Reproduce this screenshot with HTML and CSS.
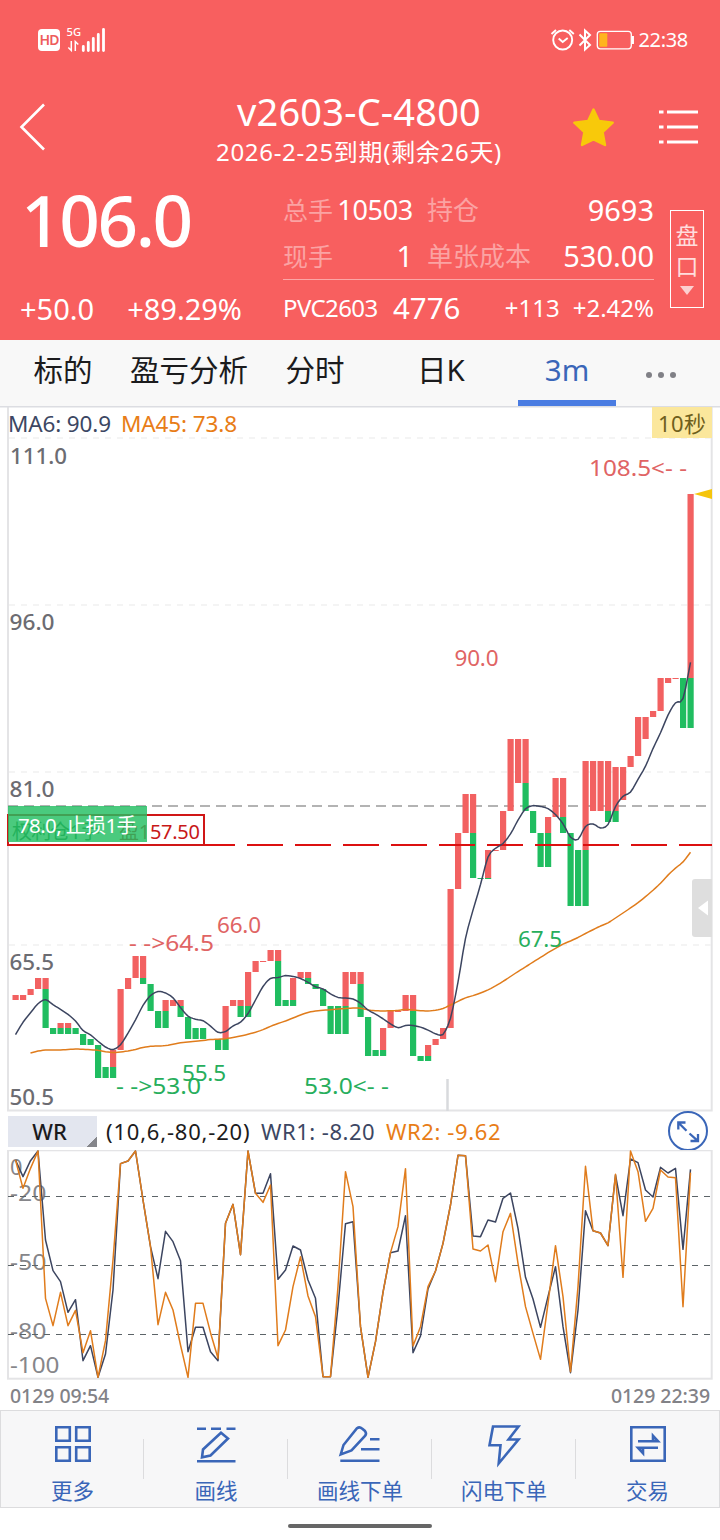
FILE: index.html
```html
<!DOCTYPE html>
<html lang="zh-CN">
<head>
<meta charset="utf-8">
<title>v2603-C-4800</title>
<link rel="stylesheet" href="styles.css">
</head>
<body>
<header class="header">
  <div class="status">
    <div class="status-left">
      <span class="hd">HD</span>
      <svg class="signal" width="40" height="32" viewBox="66 24 40 32">
        <text x="66.5" y="36" class="net" textLength="14.500" lengthAdjust="spacingAndGlyphs">5G</text>
        <path d="M71.3 41v9.5l-3-3M75.3 51v-9.500l3 3" fill="none" stroke="#fff" stroke-width="1.5"/>
        <path d="M83.300 46.500v4M88.300 42.500v8M93.300 38.500v12M98.300 34.500v16M103.500 29.300v21.200" stroke="#fff" stroke-width="2.800" stroke-linecap="round"/>
      </svg>
    </div>
    <div class="status-right">
      <svg width="84" height="26" viewBox="550 27 84 26" fill="none" stroke="#fff">
        <circle cx="562.700" cy="40" r="9.500" stroke-width="1.900"/>
        <path d="M558.700 38.500l4 3.500l5-4M551.500 34l4.500-4M573.800 34l-4.500-4" stroke-width="1.900"/>
        <path d="M579.500 34.500l10.500 10.500l-5 4.500v-19l5 4.500l-10.500 10.500" stroke-width="2"/>
        <rect x="597.300" y="31.300" width="34" height="17.500" rx="3" stroke-width="1.300"/>
        <rect x="599.300" y="33.200" width="8" height="13.600" rx="1" fill="#ffb41e" stroke="none"/>
        <path d="M632.700 36v8" stroke-width="2.500"/>
      </svg>
      <span class="clock">22:38</span>
    </div>
  </div>
  <div class="titlebar">
    <svg class="back" width="28" height="50" viewBox="18 102 28 50" fill="none" stroke="#fff" stroke-width="2.600"><path d="M44 104.500L21.500 127L44 149.500"/></svg>
    <div class="titles">
      <h1 class="title">v2603-C-4800</h1>
      <div class="subtitle">2026-2-25到期(剩余26天)</div>
    </div>
    <svg class="star" width="42" height="40" viewBox="572 107 42 40"><path d="M593.500 109.500L598.900 121L612.700 122.700L602.600 132L605 145L593.500 139.300L582 145L584.400 132L574.300 122.700L588.100 121Z" fill="#f8c90a" stroke="#f8c90a" stroke-width="2.400" stroke-linejoin="round"/></svg>
    <svg class="menu" width="40" height="36" viewBox="658 109 40 36" stroke="#fff" stroke-width="3"><path d="M659 112h4.500M667 112h31M659 127h4.500M667 127h31M659 142h4.500M667 142h31"/></svg>
  </div>
  <div class="quote">
    <div class="last">
      <div class="price">106.0</div>
      <div class="change"><span>+50.0</span><span>+89.29%</span></div>
    </div>
    <div class="facts">
      <div class="fact-grid">
        <span class="lab">总手</span><span class="val small">10503</span><span class="lab">持仓</span><span class="val">9693</span>
        <span class="lab">现手</span><span class="val">1</span><span class="lab">单张成本</span><span class="val">530.00</span>
      </div>
      <div class="under"><span class="sym">PVC2603</span><span class="u-price">4776</span><span class="u-chg">+113</span><span class="u-pct">+2.42%</span></div>
    </div>
    <div class="pankou"><span>盘</span><span>口</span><i class="caret"></i></div>
  </div>
</header>

<nav class="tabs">
  <span>标的</span><span>盈亏分析</span><span>分时</span><span>日K</span><span class="active">3m</span>
  <span class="dots"><i></i><i></i><i></i></span>
</nav>

<svg class="price-chart" width="720" height="706" viewBox="0 406 720 706">
  <path class="frame" d="M8 407V1110.500H711.700V407"/>
  <path d="M0 406.700H720" stroke="#dcdde2" stroke-width="1.400"/>
  <path class="grid" d="M9 438H711M9 605H711M9 772H711M9 945H711"/>
  <path d="M447.500 1079V1111" stroke="#d8dadd" stroke-width="2.500"/>
  <g class="axis">
    <text x="10" y="463.500" textLength="57" lengthAdjust="spacingAndGlyphs">111.0</text>
    <text x="9.500" y="630" textLength="45" lengthAdjust="spacingAndGlyphs">96.0</text>
    <text x="9.500" y="797" textLength="45" lengthAdjust="spacingAndGlyphs">81.0</text>
    <text x="9.500" y="970" textLength="44.500" lengthAdjust="spacingAndGlyphs">65.5</text>
    <text x="9.500" y="1105" textLength="44.500" lengthAdjust="spacingAndGlyphs">50.5</text>
  </g>
  <path d="M8 806H712" stroke="#9a9a9a" stroke-width="1.700" stroke-dasharray="10 6"/>
  <g id="candles"></g>
  <path d="M7 845H712" stroke="#dc1010" stroke-width="2" stroke-dasharray="36 12"/>
  <polyline id="ma45" class="line orange"/>
  <polyline id="ma6" class="line navy"/>
  <g class="legend">
    <text x="8" y="432" fill="#3c4763" textLength="103">MA6: 90.9</text>
    <text x="121" y="432" fill="#e87d17" textLength="116">MA45: 73.8</text>
  </g>
  <g class="mark up">
    <text x="129" y="951" textLength="85" lengthAdjust="spacingAndGlyphs">- -&gt;64.5</text>
    <text x="217" y="933" textLength="44">66.0</text>
    <text x="454.500" y="666" textLength="44">90.0</text>
    <text x="589" y="476" textLength="98" lengthAdjust="spacingAndGlyphs">108.5&lt;- -</text>
  </g>
  <g class="mark down">
    <text x="116" y="1094" textLength="85" lengthAdjust="spacingAndGlyphs">- -&gt;53.0</text>
    <text x="182" y="1081" textLength="44">55.5</text>
    <text x="304" y="1094" textLength="85" lengthAdjust="spacingAndGlyphs">53.0&lt;- -</text>
    <text x="518" y="947" textLength="44">67.5</text>
  </g>
  <path d="M8 815H204V845H8Z" fill="none" stroke="#d01616" stroke-width="2"/>
  <g class="order" fill="#c81818">
    <text x="12" y="839" textLength="88" fill="#2a7a45">权利仓1手</text>
    <text x="119" y="839" textLength="81">盈157.50</text>
  </g>
  <rect x="8" y="806" width="139" height="36" fill="#22be62" fill-opacity=".82"/>
  <text x="18" y="833" class="stop" textLength="119">78.0, 止损1手</text>
  <rect x="652" y="407" width="60" height="31" fill="#fbe79c"/>
  <text x="658" y="432" class="sec" textLength="48">10秒</text>
  <path d="M694 494L712 489V499Z" fill="#f5c50c"/>
  <path d="M712 879H695Q692 879 692 882V934Q692 937 695 937H712Z" fill="#dedede"/>
  <path d="M698 908L708 900.500V915.500Z" fill="#fff"/>
</svg>

<div class="wr-bar">
  <button class="wr-btn">WR</button>
  <span class="params">(10,6,-80,-20)</span>
  <span class="wr1">WR1: -8.20</span>
  <span class="wr2">WR2: -9.62</span>
  <svg class="expand" width="42" height="42" viewBox="667 1109 42 42" fill="none" stroke="#3a66b8" stroke-width="2"><circle cx="688" cy="1130" r="19"/><path stroke-width="2.300" d="M678.300 1128.500V1121.500H685.500M678.500 1121.700L686.500 1129.700M689.500 1132.500L697.500 1139.700M698 1133V1140H690.500"/></svg>
</div>

<svg class="wr-chart" width="720" height="230" viewBox="0 1150 720 230">
  <rect class="frame" x="8" y="1150.300" width="703.700" height="228.400"/>
  <g class="wr-axis">
    <text x="10" y="1175" textLength="12.500" lengthAdjust="spacingAndGlyphs">0</text>
    <text x="10" y="1201" textLength="36.500" lengthAdjust="spacingAndGlyphs">-20</text>
    <text x="10" y="1270" textLength="36.500" lengthAdjust="spacingAndGlyphs">-50</text>
    <text x="10" y="1339" textLength="36.500" lengthAdjust="spacingAndGlyphs">-80</text>
    <text x="10" y="1373" textLength="49.500" lengthAdjust="spacingAndGlyphs">-100</text>
  </g>
  <path d="M8 1196.500H712M8 1265.500H712M8 1334.500H712" stroke="#5c6468" stroke-dasharray="6 6"/>
  <polyline id="wr1" class="line navy"/>
  <polyline id="wr2" class="line orange"/>
</svg>
<div class="times"><span>0129 09:54</span><span>0129 22:39</span></div>

<footer class="toolbar">
  <div class="tool"><svg viewBox="0 0 48 48"><path d="M7.300 7.300h13.500v13.500h-13.500zM27.200 7.300h13.500v13.500h-13.500zM7.300 27.200h13.500v13.500h-13.500zM27.200 27.200h13.500v13.500h-13.500z"/></svg><span>更多</span></div>
  <div class="tool"><svg viewBox="0 0 48 48"><path d="M5 8.700h9M19 8.700h10M34.500 8.700h9M5 41.200h38.500M10 37.300L11 29.500L29 12.800L36 18.500L18.500 35.500Z"/></svg><span>画线</span></div>
  <div class="tool"><svg viewBox="0 0 48 48"><path d="M4.700 34.500L7.500 25L21 8.300Q23.500 6.300 26 8.500L29 11Q31 13.500 29 16L15.500 30.500ZM34 19.300h9.500M25 29.300h18.500M4.300 40.700h39.200"/></svg><span>画线下单</span></div>
  <div class="tool"><svg viewBox="0 0 48 48"><path d="M13 6.500H38.500L28.500 19.500H38.500L18.700 43.500L20.500 25.300H9.500Z"/></svg><span>闪电下单</span></div>
  <div class="tool"><svg viewBox="0 0 48 48"><path d="M7.300 7.300h33.400v33.400h-33.400z"/><path d="M14 21.300h20l-5-5.500v5M34 27.700h-20l5 5.500v-5"/></svg><span>交易</span></div>
</footer>
<div class="home"><i></i></div>
<script src="chart.js"></script>
</body>
</html>
```
FILE: styles.css
```css
* { box-sizing: border-box; }
body { margin: 0; width: 720px; height: 1540px; overflow: hidden; background: #fff; font-family: "Noto Sans", "Noto Sans CJK SC", sans-serif; }
svg { display: block; }
.header { height: 340px; background: #f85f5f; color: #fff; }
.status { height: 80px; display: flex; justify-content: space-between; align-items: center; padding: 0 32px 0 38px; }
.status-left, .status-right { display: flex; align-items: center; }
.status-left { gap: 6px; }
.status-right { gap: 4px; }
.signal { overflow: visible; }
.hd { width: 22px; height: 22px; border-radius: 4px; background: #fff; color: #ee5c5c; font-size: 14px; line-height: 22px; text-align: center; letter-spacing: -1px; font-weight: 600; }
.net { font-size: 11px; fill: #fff; font-weight: 500; }
.clock { font-size: 20px; letter-spacing: -.3px; line-height: 26px; }
.titlebar { height: 100px; display: flex; align-items: flex-start; padding-left: 18px; }
.back { margin-top: 22px; }
.titles { width: 314px; margin-left: 156px; padding-top: 8px; text-align: center; white-space: nowrap; }
.title { margin: 0; font-size: 38px; line-height: 46px; font-weight: 400; letter-spacing: .2px; }
.subtitle { margin-top: 1px; font-size: 24px; line-height: 34px; letter-spacing: .7px; }
.star { margin: 27px 44px 0 56px; }
.menu { margin-top: 29px; }
.quote { height: 160px; display: flex; padding-left: 20px; }
.last { width: 263px; }
.price { height: 80px; font-size: 71px; line-height: 80px; letter-spacing: -2.400px; margin-left: 1px; font-weight: 500; }
.change { margin-top: 31px; display: flex; gap: 33px; font-size: 29px; line-height: 36px; }
.facts { width: 371px; }
.fact-grid { height: 100px; padding-top: 6px; display: grid; grid-template-columns: 53px 77px 114px 127px; grid-template-rows: 47px 46px; align-items: center; border-bottom: 1px solid #fca6a6; }
.fact-grid .lab:nth-child(4n+3) { padding-left: 14px; font-size: 26px; }
.lab { font-size: 25px; line-height: 36px; color: #fba3a3; white-space: nowrap; }
.val { font-size: 29px; line-height: 36px; text-align: right; }
.small { font-size: 27px; letter-spacing: -.3px; }
.under { display: flex; align-items: center; height: 56px; font-size: 24px; line-height: 36px; }
.sym { letter-spacing: -.600px; width: 110px; }
.u-price { font-size: 29.500px; }
.u-chg { margin-left: auto; }
.u-pct { margin-left: 13px; }
.pankou { margin: 30px 0 0 16px; width: 34px; height: 98px; border: 1px solid #fff; color: #fdd; display: flex; flex-direction: column; align-items: center; font-size: 23px; padding-top: 9px; }
.pankou span { line-height: 31px; height: 31px; }
.caret { margin-top: 4px; border: 7px solid transparent; border-top: 9px solid #fcd0d0; border-bottom: 0; }
.tabs { height: 66px; display: grid; grid-template-columns: repeat(5, 126px) 62px; background: #f8f8f8; font-size: 29.500px; color: #1b1b1d; text-align: center; line-height: 60px; }
.tabs > span { height: 66px; }
.tabs .active { color: #3a66b8; width: 98px; margin-left: 14px; border-bottom: 6px solid #4a7ce2; }
.dots { display: flex; gap: 6px; justify-content: center; padding-top: 32px; }
.dots i { width: 6px; height: 6px; border-radius: 50%; background: #808086; }
.frame { fill: none; stroke: #e4e4e6; stroke-width: 2; }
.grid { fill: none; stroke: #f1f1f1; stroke-width: 1.500; stroke-dasharray: 6 6; }
.axis { font-size: 22.500px; font-weight: 500; fill: #6c6c72; }
.legend, .mark { font-size: 22.500px; }
.up { fill: #e06464; }
.down { fill: #27ae5c; }
.order { font-size: 20px; }
.stop { font-size: 20.500px; fill: #fff; }
.sec { font-size: 22px; fill: #6f5f1c; }
.line { fill: none; stroke-width: 1.500; stroke-linejoin: round; }
.navy { stroke: #3c4560; }
.orange { stroke: #e07c1c; }
.candle-up { fill: #f26161; }
.candle-down { fill: #20bd60; }
.wr-bar { height: 38px; display: flex; align-items: center; padding-left: 8px; font-size: 22px; white-space: nowrap; }
.wr-btn { width: 89px; height: 31px; margin: 0; padding: 0 6px 0 0; border: 0; font: 500 22px/31px "Noto Sans", sans-serif; color: #1b1b1d; background: linear-gradient(135deg, transparent 50%, #85868b 50%) right bottom / 10px 10px no-repeat #e3e6ef; }
.params { width: 155px; padding-left: 9px; letter-spacing: .800px; color: #1b1b1d; }
.wr1 { width: 125px; padding-left: 9px; color: #3c4763; letter-spacing: .500px; }
.wr2 { color: #e87d17; padding-left: 9px; letter-spacing: .600px; }
.expand { margin-left: auto; margin-right: 11px; overflow: visible; }
.wr-axis { font-size: 22px; fill: #86868a; }
.times { height: 30px; display: flex; justify-content: space-between; align-items: center; padding: 0 10px; font-size: 19.500px; letter-spacing: -.050px; font-weight: 500; color: #828287; }
.toolbar { height: 98px; display: grid; grid-template-columns: 143px repeat(3, 144px) 143px; background: #f7f7f8; border: 1px solid #dcdcde; }
.tool { display: flex; flex-direction: column; align-items: center; padding-top: 9px; font-size: 21.500px; color: #3a66b8; background: linear-gradient(#dcdcde, #dcdcde) 100% 28px / 1px 40px no-repeat; }
.tool:last-child { background: none; }
.tool svg { width: 48px; height: 48px; fill: none; stroke: #3a66b8; stroke-width: 2.600; overflow: visible; }
.tool span { line-height: 28px; margin-top: 9px; }
.home { display: flex; justify-content: center; padding-top: 16px; }
.home i { width: 144px; height: 4px; border-radius: 2px; background: #666; }
```
FILE: chart.js
```js
// Bars are 7.5px apart; each entry is [index, top, bottom] in chart pixels.
const STEP = 7.5, X0 = 15.5;
const rises = [[0,995,1000],[1,995,1000],[2,989,995],[3,978,989],[4,978,989],[6,1023,1028],[7,1023,1028],[13,1050,1067],[14,989,1050],[15,978,989],[16,956,978],[17,956,978],[20,1000,1011],[21,1000,1006],[22,1000,1006],[28,1006,1039],[29,1000,1006],[30,1000,1006],[31,972,1006],[32,961,972],[33,961,962],[34,950,961],[35,950,961],[37,978,1000],[38,972,978],[39,972,978],[44,972,1006],[45,972,984],[46,972,984],[49,1028,1050],[50,1011,1028],[51,1011,1012],[52,995,1011],[53,995,1011],[55,1045,1056],[56,1039,1045],[57,1028,1039],[58,889,1028],[59,833,889],[60,794,833],[61,794,833],[63,850,878],[64,850,851],[65,811,850],[66,739,811],[67,739,783],[68,739,783],[71,817,833],[72,778,817],[73,778,817],[76,761,850],[77,761,811],[78,761,811],[79,761,811],[80,767,811],[81,767,800],[82,756,767],[83,717,756],[84,717,739],[85,711,717],[86,678,711],[87,678,683],[88,678,679],[90,494,678]];
const falls = [[4,989,1028],[5,1028,1034],[6,1028,1034],[7,1028,1034],[8,1028,1034],[9,1034,1045],[10,1039,1045],[11,1045,1078],[12,1067,1078],[13,1067,1078],[17,978,984],[18,984,1011],[19,1011,1028],[20,1011,1028],[22,1006,1017],[23,1017,1039],[24,1028,1039],[25,1028,1039],[26,1039,1040],[27,1039,1050],[28,1039,1050],[30,1006,1017],[31,1006,1017],[35,961,1006],[36,1000,1006],[37,1000,1006],[39,978,984],[40,984,989],[41,989,1006],[42,1006,1034],[43,1006,1034],[44,1006,1034],[46,984,1017],[47,1017,1056],[48,1050,1056],[49,1050,1056],[53,1011,1056],[54,1056,1061],[55,1056,1061],[61,833,878],[62,878,879],[63,878,879],[68,783,811],[69,811,833],[70,833,867],[71,833,867],[73,817,833],[74,833,906],[75,850,906],[76,850,906],[79,811,822],[80,811,822],[89,678,728],[90,678,728]];
const ma6 = [1034.7,1022,1012.7,1003.3,998.7,1004.7,1009.3,1014.3,1020.7,1031,1034.7,1041.3,1047.3,1050.3,1045.3,1033.3,1020,1005,995,991,992.7,997.3,1007.7,1016.7,1019.3,1020.3,1026,1033,1032,1025.7,1022.7,1014,1000,986,977.7,977.7,975.3,976.3,978.3,982.3,987,988.7,994,997.7,998,998.7,1003,1010.3,1014,1018.7,1024,1028.3,1025.3,1025.3,1027,1030,1034,1036,1020,983,936.7,910,885,855,848,844,834.3,820,808,805.3,806.3,808.3,814.3,823.3,838,841,825.3,823.3,828.7,826,805.7,795.7,793,779.3,766.7,748.3,733,714.7,701.7,702,662.3];
const ma45 = [1053,1051,1050,1050,1050,1049.5,1049,1049.3,1049.7,1050.3,1051.7,1052.7,1052,1051,1049.5,1047.3,1046.3,1046,1045.7,1044.3,1042.7,1042,1041.3,1040.5,1039.5,1039.3,1038.7,1037.5,1036,1034.3,1032.3,1029.7,1026.3,1023.5,1021,1018,1015,1012.3,1011,1010.3,1009.7,1009,1008.5,1008,1008,1010,1010.7,1011,1010.8,1010.5,1009.3,1010,1010.7,1011,1010.3,1008.7,1005,1001.3,997.7,995.7,993,990,986,981.5,976.5,971.5,967,962,957.5,952.7,948.3,944,941,937.5,933.5,929.7,926,923,918,913,908,902.7,896.7,890.3,883.3,875,868,862.3,852.3];
// Williams %R curves, in thirds of a pixel below y = 1100.
const wr1 = [180,230,182,153,420,512,545,637,599,782,737,832,762,570,191,183,153,300,440,536,394,425,482,755,682,682,755,782,370,313,464,153,280,280,221,538,510,438,450,540,595,830,830,620,371,365,680,832,725,577,458,453,347,758,708,567,513,430,315,166,167,408,410,360,366,295,279,385,532,597,682,590,500,680,818,630,332,392,399,437,225,347,177,188,270,291,202,219,205,448,208];
const wr2 = [180,265,205,153,595,677,577,677,631,758,692,832,722,480,191,183,153,300,440,674,577,630,735,832,610,610,698,775,370,313,464,153,280,307,255,737,690,560,470,588,650,830,830,560,215,320,680,832,725,577,458,380,206,738,680,560,513,430,315,166,167,447,453,435,545,395,340,490,620,700,778,610,437,590,815,560,199,392,399,437,223,532,153,215,364,325,210,231,233,620,218];

const candles = document.getElementById('candles');
function bars(list, cls) {
  for (const [i, top, bottom] of list) {
    const r = document.createElementNS('http://www.w3.org/2000/svg', 'rect');
    r.setAttribute('class', cls);
    r.setAttribute('x', X0 + i * STEP - 3);
    r.setAttribute('y', top);
    r.setAttribute('width', 6.2);
    r.setAttribute('height', bottom - top);
    candles.appendChild(r);
  }
}

// Cubic-free rounding: each corner becomes a short quadratic-like arc of points.
function soften(pts, t) {
  const out = [pts[0]];
  for (let i = 1; i < pts.length - 1; i++) {
    const [p, c, n] = [pts[i - 1], pts[i], pts[i + 1]];
    const a = [c[0] + (p[0] - c[0]) * t, c[1] + (p[1] - c[1]) * t];
    const b = [c[0] + (n[0] - c[0]) * t, c[1] + (n[1] - c[1]) * t];
    out.push(a, [(a[0] + 2 * c[0] + b[0]) / 4, (a[1] + 2 * c[1] + b[1]) / 4], b);
  }
  out.push(pts[pts.length - 1]);
  return out;
}
function line(id, ys, first, t) {
  let pts = ys.map((y, k) => [X0 + (k + first) * STEP, y]);
  if (t) pts = soften(pts, t);
  document.getElementById(id).setAttribute('points', pts.map(p => p.join(',')).join(' '));
}
bars(rises, 'candle-up');
bars(falls, 'candle-down');
line('ma6', ma6, 0, 0.35);
line('ma45', ma45, 2, 0.35);
line('wr1', wr1.map(v => 1100 + v / 3), 0, 0);
line('wr2', wr2.map(v => 1100 + v / 3), 0, 0);
```
